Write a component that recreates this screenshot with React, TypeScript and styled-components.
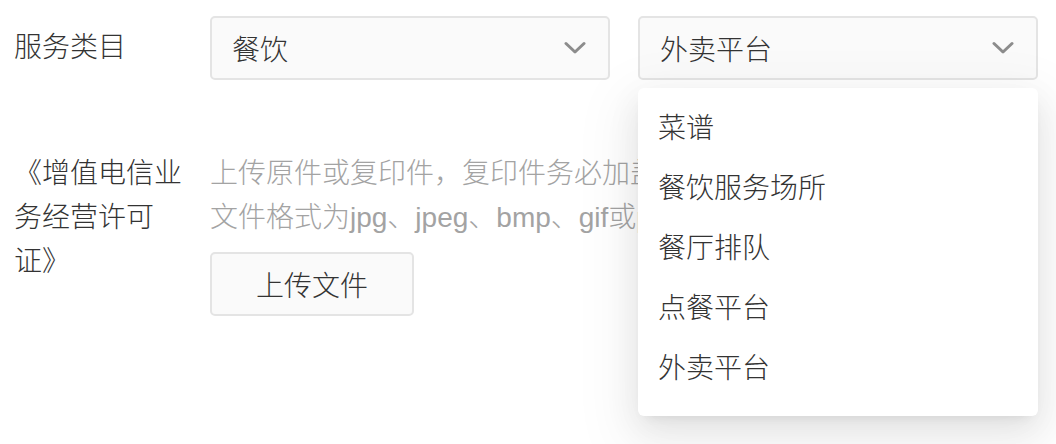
import React from "react";
import styled, { createGlobalStyle } from "styled-components";

const GlobalStyle = createGlobalStyle`
	html, body {
		margin: 0;
		padding: 0;
		background: #fff;
	}
	body {
		font-family: "Liberation Sans", "Noto Sans CJK SC", sans-serif;
		font-size: 28px;
		font-weight: 300;
		color: #333;
	}
	* {
		box-sizing: border-box;
	}
`;

const Page = styled.div`
	width: 1056px;
	height: 444px;
	padding: 16px 0 0 14px;
	display: flex;
	flex-direction: column;
	gap: 72px;
	overflow: hidden;
`;

const FormRow = styled.div`
	display: flex;
	align-items: ${(p: { $center?: boolean }) => (p.$center ? "center" : "flex-start")};
`;

const Label = styled.div`
	width: 180px;
	margin-right: 16px;
	line-height: 44px;
	color: #333;
`;

const SelectGroup = styled.div`
	display: flex;
	gap: 28px;
`;

const SelectWrap = styled.div`
	position: relative;
`;

const SelectBox = styled.div`
	width: 400px;
	height: 64px;
	padding: 0 22px 0 20px;
	display: flex;
	align-items: center;
	justify-content: space-between;
	background: #fafafa;
	border: 2px solid #e4e4e4;
	border-radius: 5px;
	color: #333;
`;

const Chevron = styled.svg`
	width: 22px;
	height: 14px;
`;

const Dropdown = styled.ul`
	position: absolute;
	top: 72px;
	left: 0;
	width: 400px;
	height: 328px;
	margin: 0;
	padding: 8px 0;
	list-style: none;
	background: #fff;
	border-radius: 6px;
	box-shadow: 0 6px 12px -8px rgba(0, 0, 0, 0.12), 0 12px 32px 0 rgba(0, 0, 0, 0.08),
		0 18px 56px 16px rgba(0, 0, 0, 0.05);
	z-index: 10;
`;

const Option = styled.li`
	height: 60px;
	padding: 0 20px;
	display: flex;
	align-items: center;
	color: #333;
`;

const Content = styled.div`
	display: flex;
	flex-direction: column;
	width: 828px;
`;

const Hint = styled.p`
	margin: 0;
	line-height: 44px;
	color: #a3a3a3;
	white-space: nowrap;
`;

const UploadButton = styled.button`
	margin-top: 12px;
	width: 204px;
	height: 64px;
	font: inherit;
	color: #333;
	background: #fafafa;
	border: 2px solid #e4e4e4;
	border-radius: 5px;
`;

const options = ["菜谱", "餐饮服务场所", "餐厅排队", "点餐平台", "外卖平台"];

function Select({ value, open }: { value: string; open?: boolean }) {
	return (
		<SelectWrap>
			<SelectBox>
				<span>{value}</span>
				<Chevron viewBox="0 0 22 14">
					<path d="M2 2.5 L11 11 L20 2.5" fill="none" stroke="#8c8c8c" strokeWidth="3" strokeLinecap="round" strokeLinejoin="round" />
				</Chevron>
			</SelectBox>
			{open && (
				<Dropdown>
					{options.map((o) => (
						<Option key={o}>{o}</Option>
					))}
				</Dropdown>
			)}
		</SelectWrap>
	);
}

export default function App() {
	return (
		<>
			<GlobalStyle />
			<Page>
				<FormRow $center>
					<Label>服务类目</Label>
					<SelectGroup>
						<Select value="餐饮" />
						<Select value="外卖平台" open />
					</SelectGroup>
				</FormRow>
				<FormRow>
					<Label>《增值电信业务经营许可证》</Label>
					<Content>
						<Hint>上传原件或复印件，复印件务必加盖公司公章</Hint>
						<Hint>文件格式为jpg、jpeg、bmp、gif或png，大小不超过5M</Hint>
						<UploadButton>上传文件</UploadButton>
					</Content>
				</FormRow>
			</Page>
		</>
	);
}
